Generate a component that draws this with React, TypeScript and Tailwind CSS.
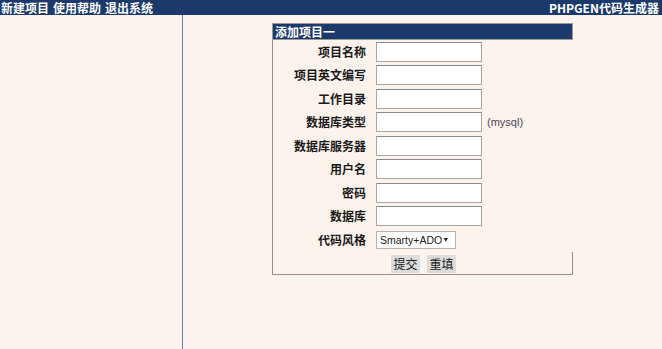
const fields = [
  { label: "项目名称" },
  { label: "项目英文编写" },
  { label: "工作目录" },
  { label: "数据库类型", hint: "(mysql)" },
  { label: "数据库服务器" },
  { label: "用户名" },
  { label: "密码" },
  { label: "数据库" },
];

const cjk = "font-['Noto_Sans_CJK_SC','Noto_Sans',sans-serif]";

export default function App() {
  return (
    <div className={`h-[349px] w-[662px] overflow-hidden bg-[#fdf3ed] ${cjk} text-[12px]`}>
      {/* top bar */}
      <div className="flex h-[15px] items-center justify-between bg-[#1b3a6b] px-px font-bold leading-none text-white">
        <div className="flex gap-[4px]">
          <span>新建项目</span>
          <span>使用帮助</span>
          <span>退出系统</span>
        </div>
        <span className="pr-[2px]">PHPGEN代码生成器</span>
      </div>

      <div className="flex h-[334px]">
        {/* sidebar */}
        <div className="w-[183px] shrink-0 border-r border-[#5b7db5]" />

        {/* main */}
        <div className="flex flex-1 justify-center pt-[8px]">
          <div className="w-[301px]">
            <div className="flex h-[17px] items-center border border-[#9a9a9a] bg-[#1b3a6b] pl-[2px] font-bold leading-none text-white">
              添加项目一
            </div>
            <div className="border-l border-b border-[#8f8f8f]">
              {fields.map((f) => (
                <div key={f.label} className="flex h-[23.5px] items-center">
                  <div className="w-[103px] pr-[10px] text-right font-bold text-[#1a1a1a]">{f.label}</div>
                  <div className="h-[20px] w-[106px] border border-[#a6a6a6] border-t-[#8a8a8a] bg-white" />
                  {f.hint && (
                    <span className="ml-[5px] font-['Liberation_Sans',sans-serif] text-[11px] text-[#4a4a5a]">
                      {f.hint}
                    </span>
                  )}
                </div>
              ))}
              <div className="flex h-[23.5px] items-center">
                <div className="w-[103px] pr-[10px] text-right font-bold text-[#1a1a1a]">代码风格</div>
                <div className="flex h-[18px] w-[80px] items-center justify-between border border-[#b5b5b5] bg-white pl-[3px] pr-[6px] font-['Liberation_Sans',sans-serif] text-[10.5px] leading-none text-[#222]">
                  <span>Smarty+ADO</span>
                  <span className="text-[7px]">▼</span>
                </div>
              </div>
              <div className="flex h-[22px] items-start justify-center gap-[7px] border-r border-[#8f8f8f] pt-[3px] pl-[2px]">
                <button className="h-[18px] w-[29px] bg-[#dcdcdc] leading-none text-[#222]">提交</button>
                <button className="h-[18px] w-[29px] bg-[#dcdcdc] leading-none text-[#222]">重填</button>
              </div>
            </div>
          </div>
        </div>
      </div>
    </div>
  );
}
